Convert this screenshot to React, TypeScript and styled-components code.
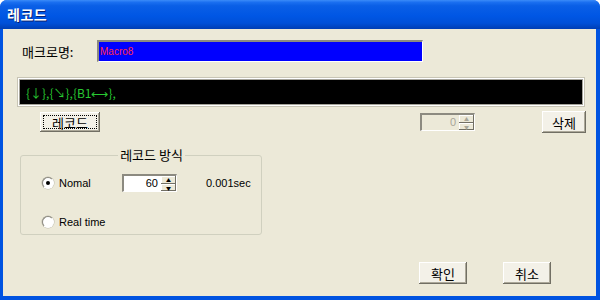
import styled, { createGlobalStyle } from 'styled-components';

const GlobalStyle = createGlobalStyle`
  html, body {
    margin: 0;
    padding: 0;
    background: #ffffff;
  }
  body {
    font-family: 'Noto Sans CJK KR', 'Liberation Sans', sans-serif;
  }
`;

const Window = styled.div`
  width: 600px;
  height: 300px;
  display: flex;
  flex-direction: column;
  background: #0053e1;
  border-radius: 7px 7px 0 0;
  overflow: hidden;
`;

const TitleBar = styled.div`
  height: 29px;
  flex: none;
  display: flex;
  align-items: center;
  padding: 0 7px 2px;
  box-sizing: border-box;
  background: linear-gradient(
    to bottom,
    #3b8cf8 0%,
    #1a6ff0 8%,
    #0a5fe6 20%,
    #0056e4 55%,
    #0050d8 80%,
    #003eb4 100%
  );
  color: #ffffff;
  font-size: 14px;
  font-weight: 700;
  letter-spacing: 0.5px;
  text-shadow: 1px 1px 0 #0a1f6e;
`;

const Body = styled.div`
  flex: 1;
  margin: 0 4px 4px 3px;
  background: #ece9d8;
  display: flex;
  flex-direction: column;
  padding-top: 11px;
  box-sizing: border-box;
`;

const Row = styled.div<{ $top?: number; $left?: number }>`
  display: flex;
  align-items: center;
  margin-top: ${(p) => p.$top ?? 0}px;
  padding-left: ${(p) => p.$left ?? 0}px;
`;

const Label = styled.span`
  width: 75px;
  font-size: 13px;
  color: #000;
`;

const NameField = styled.div`
  width: 326px;
  height: 22px;
  box-sizing: border-box;
  background: #0000ff;
  border-top: 2px solid #8c8a80;
  border-left: 2px solid #8c8a80;
  border-bottom: 1px solid #ffffff;
  border-right: 1px solid #ffffff;
  color: #ff2a4a;
  font-family: 'Liberation Sans', sans-serif;
  font-size: 10px;
  padding-left: 1px;
  display: flex;
  align-items: center;
`;

const MacroField = styled.div`
  width: 566px;
  height: 28px;
  box-sizing: border-box;
  background: #000000;
  border: 1px solid #ffffff;
  box-shadow: inset 0 0 0 1px #a6a49a, 0 0 0 1px #c8c5b5;
  outline: 2px solid #000;
  outline-offset: -4px;
  color: #28c832;
  font-family: 'Noto Sans CJK KR', sans-serif;
  font-size: 12px;
  padding-left: 7px;
  display: flex;
  align-items: center;
`;

const Button = styled.button<{ $w: number; $h?: number; $focus?: boolean }>`
  width: ${(p) => p.$w}px;
  height: ${(p) => p.$h ?? 22}px;
  flex: none;
  padding: 0;
  background: #f3f1e8;
  border: none;
  box-shadow: inset -1px -1px 0 #716f64, inset 1px 1px 0 #ffffff,
    inset -2px -2px 0 #aca899;
  font-family: 'Noto Sans CJK KR', sans-serif;
  font-size: 13px;
  color: #000;
  display: flex;
  align-items: center;
  justify-content: center;
  position: relative;
  ${(p) =>
    p.$focus &&
    `&::after {
      content: '';
      position: absolute;
      inset: 3px;
      border: 1px dotted #000;
    }`}
`;

const Spin = styled.div<{ $w: number; $disabled?: boolean }>`
  width: ${(p) => p.$w}px;
  height: 18px;
  flex: none;
  box-sizing: border-box;
  display: flex;
  background: ${(p) => (p.$disabled ? '#ece9d8' : '#ffffff')};
  border-top: 2px solid #8c8a80;
  border-left: 2px solid #8c8a80;
  border-bottom: 1px solid #ffffff;
  border-right: 1px solid #ffffff;
`;

const SpinValue = styled.span<{ $disabled?: boolean }>`
  flex: 1;
  text-align: right;
  padding-right: 3px;
  font-family: 'Liberation Sans', sans-serif;
  font-size: 11px;
  line-height: 15px;
  color: ${(p) => (p.$disabled ? '#a8a699' : '#000')};
`;

const SpinArrows = styled.div`
  width: 15px;
  display: flex;
  flex-direction: column;
`;

const Arrow = styled.div<{ $disabled?: boolean }>`
  flex: 1;
  background: #ece9d8;
  box-shadow: inset -1px -1px 0 #716f64, inset 1px 1px 0 #ffffff;
  display: flex;
  align-items: center;
  justify-content: center;
  color: ${(p) => (p.$disabled ? '#a8a699' : '#000')};
  font-size: 5px;
  line-height: 1;
`;

const GroupBox = styled.fieldset`
  width: 242px;
  height: 87px;
  box-sizing: border-box;
  margin: 0;
  padding: 12px 0 0 21px;
  border: 1px solid #d0d0bf;
  border-radius: 3px;
  display: flex;
  flex-direction: column;
`;

const Legend = styled.legend`
  margin: 0 auto;
  padding: 0 2px;
  font-size: 13px;
  color: #000;
  line-height: 14px;
`;

const RadioRow = styled.div<{ $top?: number }>`
  display: flex;
  align-items: center;
  height: 18px;
  margin-top: ${(p) => p.$top ?? 0}px;
`;

const Radio = styled.span<{ $checked?: boolean }>`
  width: 10px;
  height: 10px;
  flex: none;
  border-radius: 50%;
  border: 1px solid #8c8a80;
  border-right-color: #ffffff;
  border-bottom-color: #ffffff;
  background: #ffffff;
  box-shadow: 0 0 0 0.5px #bcb9ab;
  display: flex;
  align-items: center;
  justify-content: center;
  &::after {
    content: '';
    width: 4px;
    height: 4px;
    border-radius: 50%;
    background: ${(p) => (p.$checked ? '#000' : 'transparent')};
  }
`;

const RadioText = styled.span<{ $w?: number }>`
  margin-left: 5px;
  width: ${(p) => (p.$w ? `${p.$w}px` : 'auto')};
  font-family: 'Liberation Sans', sans-serif;
  font-size: 11px;
  color: #000;
`;

const Unit = styled.span`
  margin-left: 29px;
  font-family: 'Liberation Sans', sans-serif;
  font-size: 11px;
  color: #000;
`;

const Spacer = styled.div<{ $w: number }>`
  width: ${(p) => p.$w}px;
  flex: none;
`;

const SpinBox = ({ value, width, disabled }: { value: string; width: number; disabled?: boolean }) => (
  <Spin $w={width} $disabled={disabled}>
    <SpinValue $disabled={disabled}>{value}</SpinValue>
    <SpinArrows>
      <Arrow $disabled={disabled}>▲</Arrow>
      <Arrow $disabled={disabled}>▼</Arrow>
    </SpinArrows>
  </Spin>
);

const App = () => {
  return (
    <>
      <GlobalStyle />
      <Window>
        <TitleBar>레코드</TitleBar>
        <Body>
          <Row $left={19}>
            <Label>매크로명:</Label>
            <NameField>Macro8</NameField>
          </Row>
          <Row $top={16} $left={15}>
            <MacroField>{'{↓},{↘},{B1⟷},'}</MacroField>
          </Row>
          <Row $top={5} $left={37}>
            <Button $w={60} $h={20} $focus>
              레코드
            </Button>
            <Spacer $w={320} />
            <SpinBox value='0' width={55} disabled />
            <Spacer $w={67} />
            <Button $w={44}>삭제</Button>
          </Row>
          <Row $top={15} $left={17}>
            <GroupBox>
              <Legend>레코드 방식</Legend>
              <RadioRow>
                <Radio $checked />
                <RadioText $w={63}>Nomal</RadioText>
                <SpinBox value='60' width={55} />
                <Unit>0.001sec</Unit>
              </RadioRow>
              <RadioRow $top={21}>
                <Radio />
                <RadioText>Real time</RadioText>
              </RadioRow>
            </GroupBox>
          </Row>
          <Row $top={27} $left={416}>
            <Button $w={48}>확인</Button>
            <Spacer $w={36} />
            <Button $w={48}>취소</Button>
          </Row>
        </Body>
      </Window>
    </>
  );
};

export default App;
